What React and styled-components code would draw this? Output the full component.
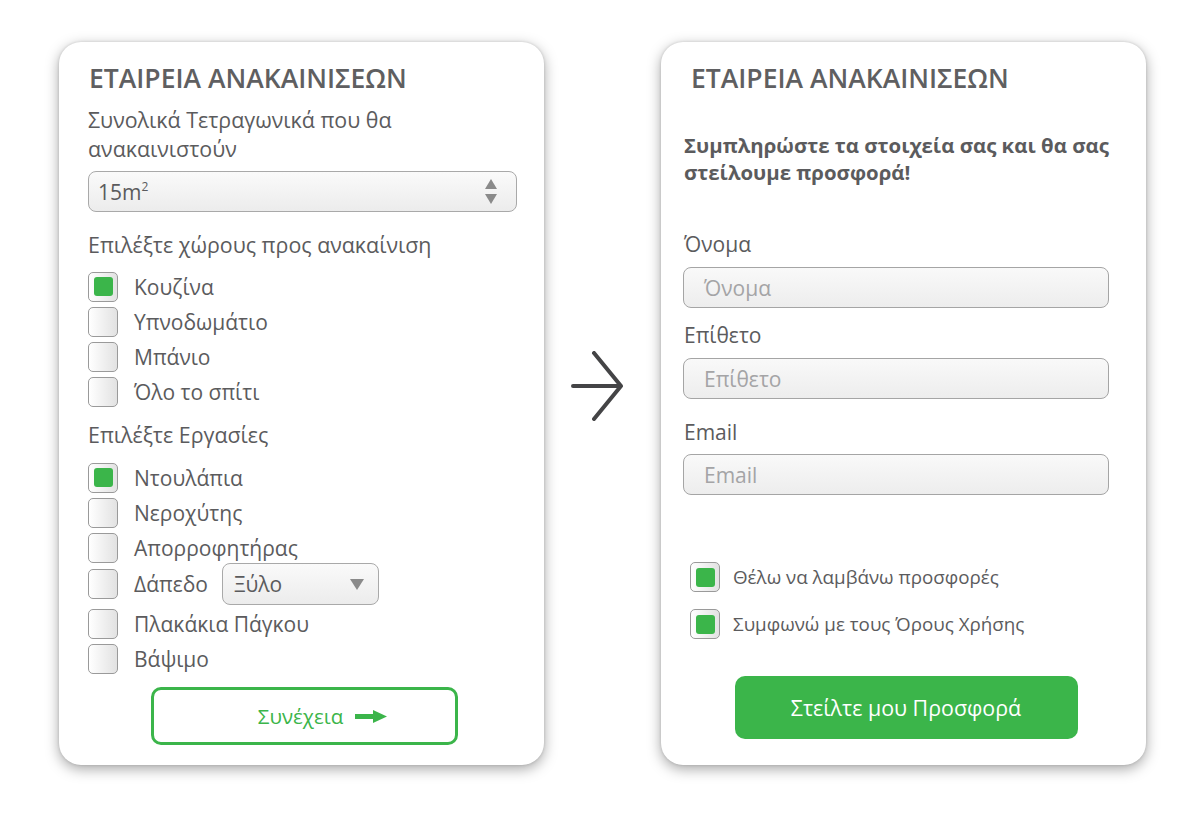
import React from 'react';
import styled, { createGlobalStyle } from 'styled-components';

const GlobalStyle = createGlobalStyle`
  body {
    margin: 0;
    background: #ffffff;
    font-family: "Open Sans", "Noto Sans", sans-serif;
    color: #5b5b5d;
  }
`;

const Page = styled.div`
  display: flex;
  align-items: flex-start;
  padding: 42px 0 0 59px;
  width: 1200px;
  height: 820px;
  box-sizing: border-box;
`;

const Card = styled.div`
  width: 485px;
  height: 723px;
  box-sizing: border-box;
  background: #fff;
  border-radius: 22px;
  box-shadow: 0 4px 14px rgba(0, 0, 0, 0.35), 0 0 3px rgba(0, 0, 0, 0.15);
  padding: ${p => p.pad};
  display: flex;
  flex-direction: column;
`;

const Middle = styled.div`
  width: 117px;
  height: 723px;
  box-sizing: border-box;
  padding: 309px 0 0 27px;
`;

const Title = styled.h1`
  margin: 0;
  font-size: 26.5px;
  font-weight: 600;
  color: #5f5f61;
  line-height: 32px;
  padding-left: ${p => p.indent || 0}px;
`;

const Label = styled.div`
  font-size: 21.4px;
  line-height: 29px;
  color: #5b5b5d;
  margin-top: ${p => p.top || 0}px;
`;

const SelectBox = styled.div`
  display: flex;
  align-items: center;
  justify-content: space-between;
  box-sizing: border-box;
  flex: none;
  width: ${p => p.w};
  height: ${p => p.h}px;
  border: 1px solid #a9a9a9;
  border-radius: 8px;
  background: linear-gradient(#fafafa, #ececec);
  padding: 0 19px 0 9px;
  font-size: 21px;
  color: #5b5b5d;
  margin-top: ${p => p.top || 0}px;
`;

const Sup = styled.sup`
  font-size: 12px;
  vertical-align: 9px;
  line-height: 0;
`;

const List = styled.div`
  display: flex;
  flex-direction: column;
  gap: ${p => p.gap}px;
  margin-top: ${p => p.top || 0}px;
`;

const Row = styled.div`
  display: flex;
  align-items: center;
  height: ${p => p.h || 31}px;
  margin: ${p => p.m || 0};
  font-size: ${p => p.fs || 21}px;
  color: #5b5b5d;
  white-space: nowrap;
`;

const Box = styled.span`
  flex: none;
  width: ${p => p.s}px;
  height: ${p => p.s}px;
  box-sizing: border-box;
  border: 1px solid #9a9a9a;
  border-radius: 5px;
  background: linear-gradient(90deg, #ffffff, #e2e2e2);
  margin: 0 ${p => p.gap}px 0 ${p => p.indent || 0}px;
  display: flex;
  align-items: center;
  justify-content: center;
  &::after {
    content: '';
    display: ${p => (p.checked ? 'block' : 'none')};
    width: ${p => p.s - 11}px;
    height: ${p => p.s - 11}px;
    border-radius: 3px;
    background: #3bb54a;
  }
`;

const InlineSelect = styled(SelectBox)`
  margin-left: 14px;
  padding: 0 14px 0 11px;
`;

const Triangle = styled.span`
  width: 0;
  height: 0;
  border-left: ${p => p.half}px solid transparent;
  border-right: ${p => p.half}px solid transparent;
  ${p => (p.up ? 'border-bottom' : 'border-top')}: ${p => p.tall}px solid #8a8a8a;
`;

const Spinner = styled.span`
  display: flex;
  flex-direction: column;
  gap: 5px;
`;

const Center = styled.div`
  display: flex;
  justify-content: center;
  margin-top: ${p => p.top}px;
  padding-left: ${p => p.shift || 0}px;
`;

const OutlineButton = styled.button`
  width: 307px;
  height: 58px;
  border: 3px solid #3bb54a;
  border-radius: 10px;
  background: #fff;
  color: #3bb54a;
  font-family: inherit;
  font-size: 20.5px;
  display: flex;
  align-items: center;
  justify-content: center;
  gap: 12px;
  padding: 0 0 0 36px;
`;

const SolidButton = styled.button`
  width: 343px;
  height: 63px;
  border: none;
  border-radius: 10px;
  background: #3bb54a;
  color: #fff;
  font-family: inherit;
  font-size: 21.4px;
`;

const Intro = styled.p`
  margin: ${p => p.top}px 0 0;
  font-size: 20.4px;
  font-weight: 700;
  line-height: 27px;
  color: #5b5b5d;
  white-space: nowrap;
`;

const FieldLabel = styled.div`
  font-size: 21px;
  line-height: 26px;
  color: #5b5b5d;
  margin-top: ${p => p.top}px;
`;

const Input = styled.div`
  box-sizing: border-box;
  width: 426px;
  height: 41px;
  margin-top: ${p => p.top}px;
  margin-left: -1px;
  border: 1px solid #a5a5a5;
  border-radius: 8px;
  background: linear-gradient(#f9f9f9, #ededed);
  display: flex;
  align-items: center;
  padding-left: 20px;
  font-size: 21px;
  color: #a4a4a6;
`;

const ArrowIcon = () => (
  <svg width="54" height="70" viewBox="0 0 54 70" fill="none">
    <path d="M2 35 H50 M23 2 L50 35 L23 68" stroke="#444446" strokeWidth="4" strokeLinecap="round" strokeLinejoin="round" />
  </svg>
);

const SmallArrow = () => (
  <svg width="32" height="13" viewBox="0 0 32 13">
    <rect x="0" y="4" width="20" height="5" fill="#3bb54a" />
    <path d="M18 0 L32 6.5 L18 13 Z" fill="#3bb54a" />
  </svg>
);

const rooms = [
  { label: 'Κουζίνα', checked: true },
  { label: 'Υπνοδωμάτιο' },
  { label: 'Μπάνιο' },
  { label: 'Όλο το σπίτι' },
];

export default function App() {
  return (
    <>
      <GlobalStyle />
      <Page>
        <Card pad="20px 27px 0 29px">
          <Title indent={1}>ΕΤΑΙΡΕΙΑ ΑΝΑΚΑΙΝΙΣΕΩΝ</Title>
          <Label top={11}>Συνολικά Τετραγωνικά που θα<br />ανακαινιστούν</Label>
          <SelectBox w="429px" h={41} top={8}>
            <span>15m<Sup>2</Sup></span>
            <Spinner>
              <Triangle up half={6} tall={10} />
              <Triangle half={6} tall={10} />
            </Spinner>
          </SelectBox>
          <Label top={18}>Επιλέξτε χώρους προς ανακαίνιση</Label>
          <List gap={4} top={12}>
            {rooms.map(r => (
              <Row key={r.label}>
                <Box s={30} gap={16} checked={r.checked} />
                {r.label}
              </Row>
            ))}
          </List>
          <Label top={13}>Επιλέξτε Εργασίες</Label>
          <List gap={4} top={13}>
            <Row><Box s={30} gap={16} checked />Ντουλάπια</Row>
            <Row><Box s={30} gap={16} />Νεροχύτης</Row>
            <Row><Box s={30} gap={16} />Απορροφητήρας</Row>
            <Row h={42} m="-4px 0 -1px">
              <Box s={30} gap={16} />Δάπεδο
              <InlineSelect w="157px" h={42}>
                <span>Ξύλο</span>
                <Triangle half={7} tall={11} />
              </InlineSelect>
            </Row>
            <Row><Box s={30} gap={16} />Πλακάκια Πάγκου</Row>
            <Row><Box s={30} gap={16} />Βάψιμο</Row>
          </List>
          <Center top={13} shift={4}>
            <OutlineButton>
              Συνέχεια <SmallArrow />
            </OutlineButton>
          </Center>
        </Card>
        <Middle>
          <ArrowIcon />
        </Middle>
        <Card pad="20px 37px 0 23px">
          <Title indent={7}>ΕΤΑΙΡΕΙΑ ΑΝΑΚΑΙΝΙΣΕΩΝ</Title>
          <Intro top={38}>
            Συμπληρώστε τα στοιχεία σας και θα σας<br />στείλουμε προσφορά!
          </Intro>
          <FieldLabel top={45}>Όνομα</FieldLabel>
          <Input top={10}>Όνομα</Input>
          <FieldLabel top={14}>Επίθετο</FieldLabel>
          <Input top={10}>Επίθετο</Input>
          <FieldLabel top={20}>Email</FieldLabel>
          <Input top={9}>Email</Input>
          <List gap={17} top={67}>
            <Row fs={18.8} h={30}><Box s={30} gap={13} indent={6} checked />Θέλω να λαμβάνω προσφορές</Row>
            <Row fs={18.8} h={30}><Box s={30} gap={13} indent={6} checked />Συμφωνώ με τους Όρους Χρήσης</Row>
          </List>
          <Center top={37} shift={19}>
            <SolidButton>Στείλτε μου Προσφορά</SolidButton>
          </Center>
        </Card>
      </Page>
    </>
  );
}
